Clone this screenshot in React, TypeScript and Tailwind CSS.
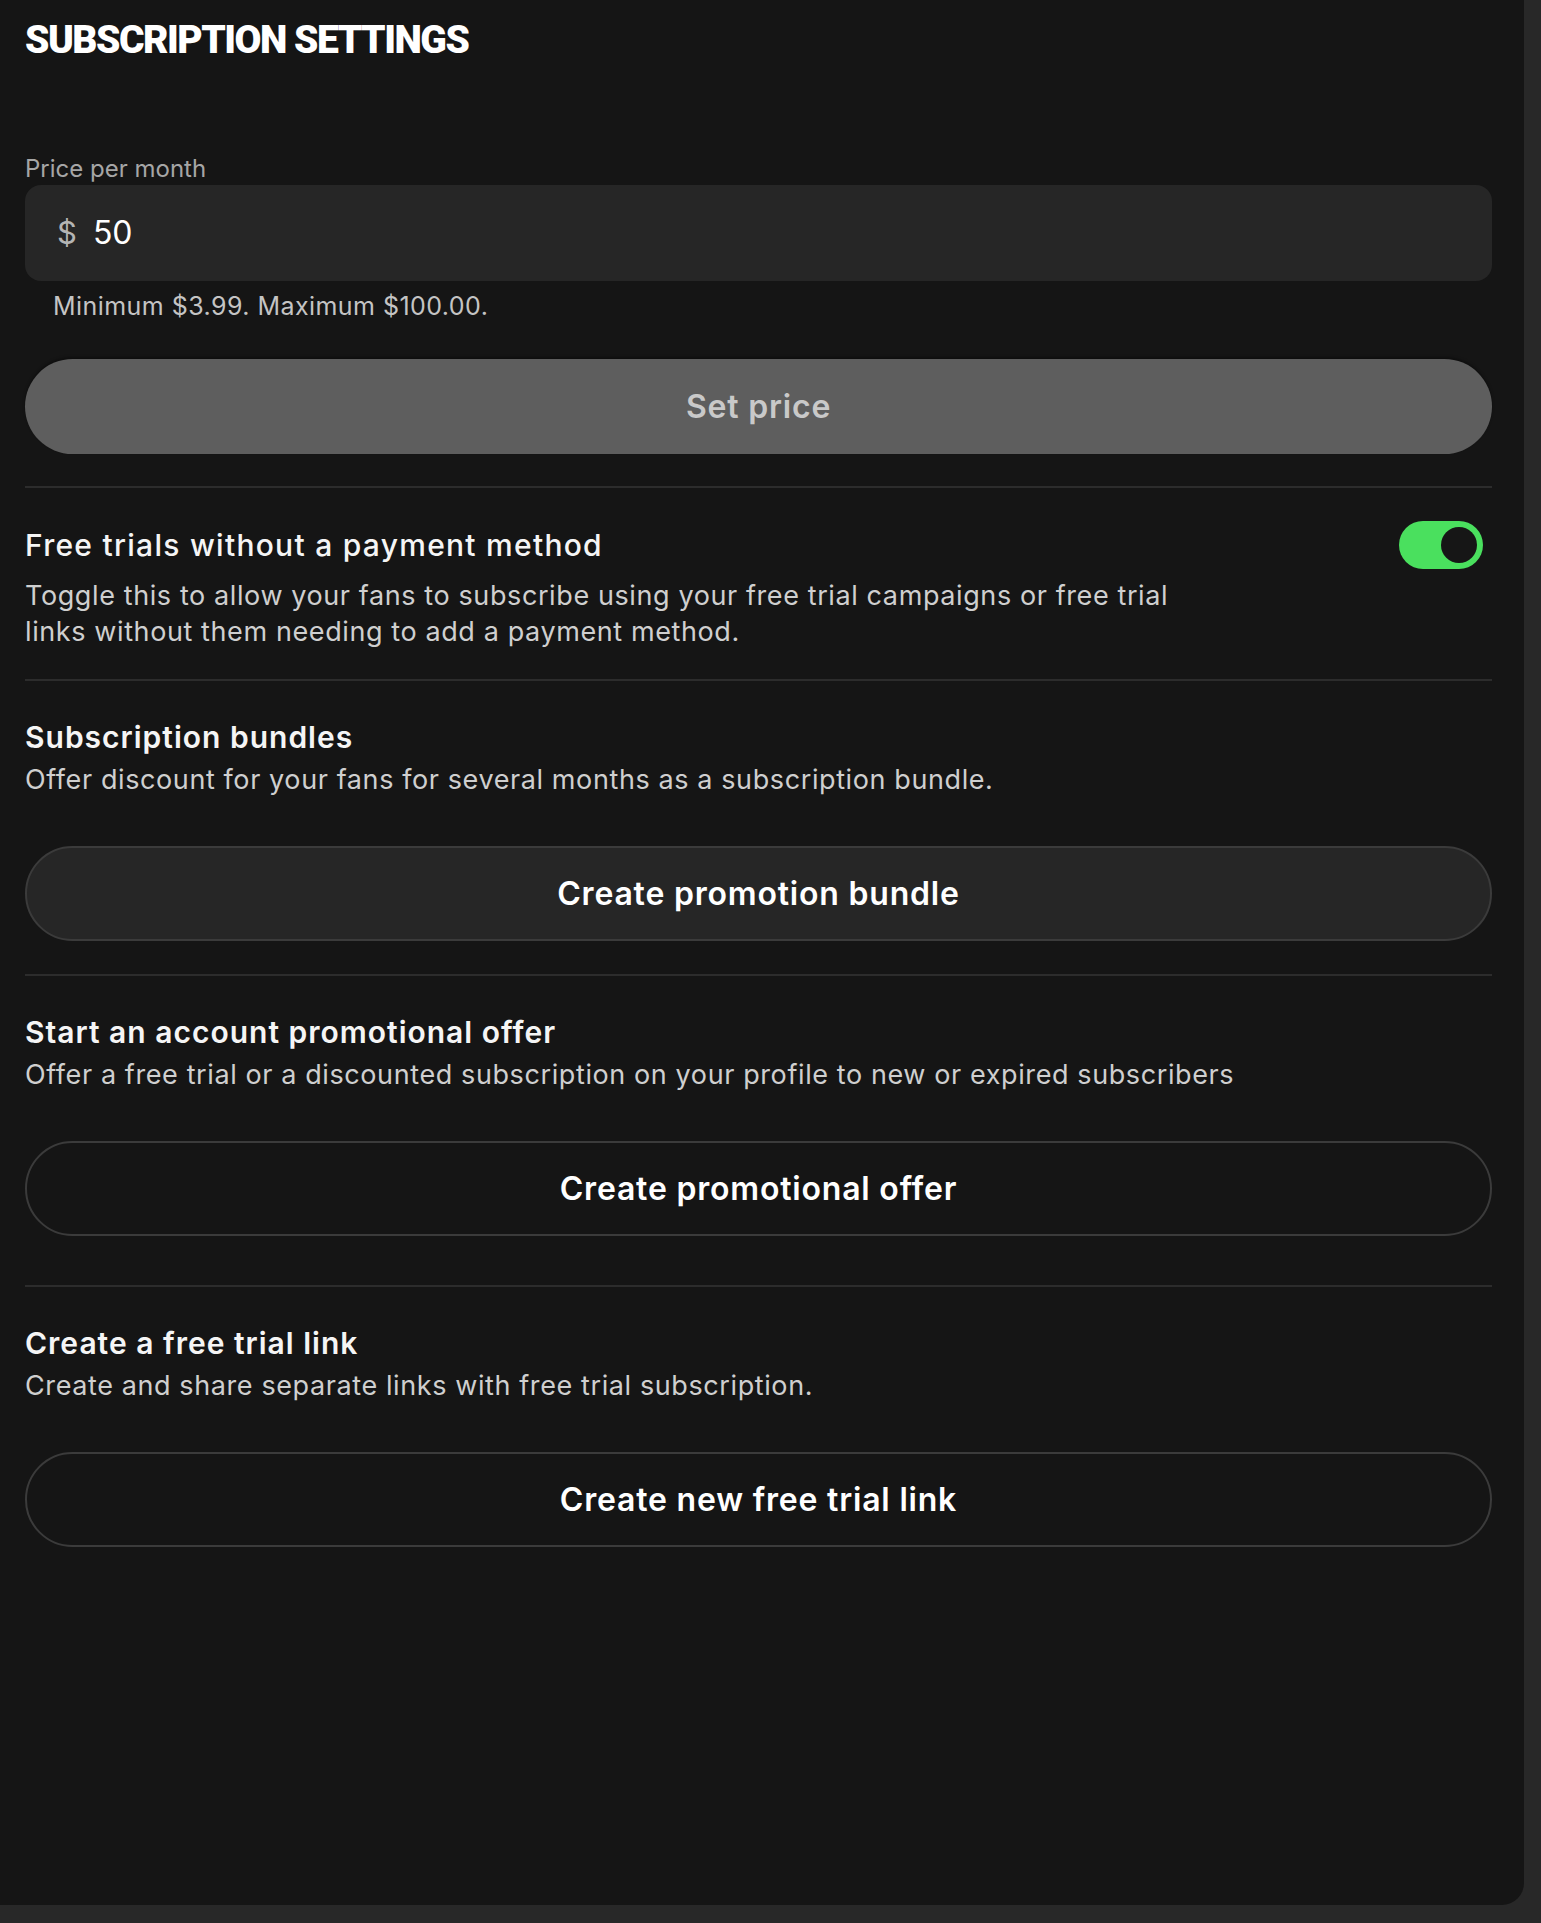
import { useState } from 'react';

function Toggle({ on, onChange }: { on: boolean; onChange: () => void }) {
  return (
    <button
      onClick={onChange}
      className={`relative mr-[9px] h-[48px] w-[84px] shrink-0 rounded-full ${on ? 'bg-[#4ae05e]' : 'bg-[#3a3a3a]'}`}
    >
      <span
        className={`absolute top-[6px] h-[36px] w-[36px] rounded-full bg-[#161616] ${on ? 'right-[6px]' : 'left-[6px]'}`}
      />
    </button>
  );
}

function Section({
  title,
  text,
  action,
  outline,
}: {
  title: string;
  text: string;
  action: string;
  outline?: boolean;
}) {
  return (
    <div className="mt-[40px]">
      <h2 className="text-[30px] leading-[33px] font-semibold tracking-[1px] text-[#f5f5f5]">{title}</h2>
      <p className="mt-[9px] text-[27px] leading-[34px] tracking-[0.6px] text-[#cfcfcf]">{text}</p>
      <button
        className={`mt-[49px] flex h-[95px] w-full items-center justify-center rounded-full border-2 border-[#3b3b3b] text-[32px] font-semibold tracking-[0.8px] text-white ${outline ? 'bg-transparent' : 'bg-[#262626]'}`}
      >
        {action}
      </button>
    </div>
  );
}

export default function App() {
  const [price, setPrice] = useState('50');
  const [freeTrials, setFreeTrials] = useState(true);

  return (
    <div className="min-h-[1923px] bg-[#282828] pr-[17px] pb-[18px] font-['Inter',sans-serif]">
      <div className="h-[1905px] rounded-br-[22px] bg-[#151515] pr-[32px] pl-[25px]">
        <h1 className="pt-[17px] font-['Roboto',sans-serif] text-[39px] leading-[46px] font-black tracking-[-1.5px] text-white">
          SUBSCRIPTION SETTINGS
        </h1>

        {/* Price */}
        <label className="mt-[91px] block text-[24px] leading-[29px] text-[#a6a6a6]">Price per month</label>
        <div className="mt-[2px] flex h-[96px] items-center rounded-[16px] bg-[#262626] pl-[32px]">
          <span className="text-[31px] text-[#b4b4b4]">$</span>
          <input
            value={price}
            onChange={(e) => setPrice(e.target.value)}
            className="ml-[16px] flex-1 bg-transparent text-[32px] text-white outline-none"
          />
        </div>
        <p className="mt-[11px] pl-[28px] text-[25px] leading-[29px] tracking-[0.45px] text-[#c4c4c4]">
          Minimum $3.99. Maximum $100.00.
        </p>
        <button className="mt-[38px] flex h-[95px] w-full items-center justify-center rounded-full bg-[#5e5e5e] text-[32px] font-semibold tracking-[0.8px] text-[#c9c9c9] shadow-[0_-2px_3px_rgba(0,0,0,0.35)]">
          Set price
        </button>

        <div className="mt-[32px] h-[2px] bg-[#2c2c2c]" />

        {/* Free trials */}
        <div className="mt-[33px] flex items-center justify-between">
          <h2 className="text-[30px] leading-[33px] font-medium tracking-[1.27px] text-[#f5f5f5]">
            Free trials without a payment method
          </h2>
          <Toggle on={freeTrials} onChange={() => setFreeTrials(!freeTrials)} />
        </div>
        <p className="mt-[9px] max-w-[1190px] text-[27px] leading-[36px] tracking-[0.6px] text-[#cfcfcf]">
          Toggle this to allow your fans to subscribe using your free trial campaigns or free trial links without them
          needing to add a payment method.
        </p>

        <div className="mt-[29px] h-[2px] bg-[#2c2c2c]" />

        <Section
          title="Subscription bundles"
          text="Offer discount for your fans for several months as a subscription bundle."
          action="Create promotion bundle"
        />

        <div className="mt-[33px] h-[2px] bg-[#2c2c2c]" />

        <Section
          title="Start an account promotional offer"
          text="Offer a free trial or a discounted subscription on your profile to new or expired subscribers"
          action="Create promotional offer"
          outline
        />

        <div className="mt-[49px] h-[2px] bg-[#2c2c2c]" />

        <Section
          title="Create a free trial link"
          text="Create and share separate links with free trial subscription."
          action="Create new free trial link"
          outline
        />
      </div>
    </div>
  );
}
